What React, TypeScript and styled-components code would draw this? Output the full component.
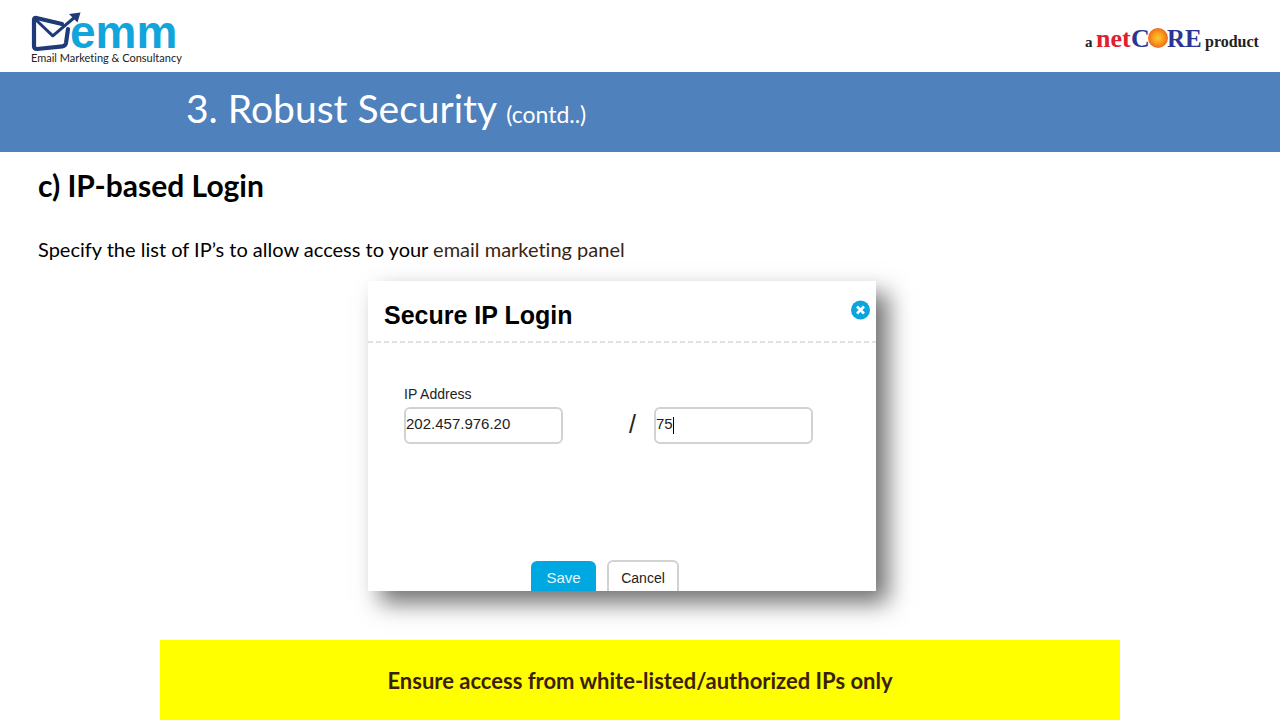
import React, { useState } from "react";
import styled, { createGlobalStyle } from "styled-components";

const GlobalStyle = createGlobalStyle`
  *, *::before, *::after { box-sizing: border-box; }
  body {
    margin: 0;
    background: #fff;
    color: #000;
    font-family: Lato, "Open Sans", sans-serif;
    font-variant-ligatures: none;
  }
  h1, h2, h3, p { margin: 0; }
`;

const Slide = styled.div`
  display: flex;
  flex-direction: column;
  min-height: 100vh;
`;

const Header = styled.header`
  display: flex;
  justify-content: space-between;
  align-items: flex-start;
  height: 72px;
  padding: 0 16px 0 28px;
`;

const Logo = styled.svg`
  display: block;
  flex: none;
`;

const TitleBand = styled.div`
  display: flex;
  align-items: center;
  height: 80px;
  padding: 0 24px 2px 186px;
  background: #4f81bd;
  color: #fff;
`;

const Title = styled.h1`
  font-size: 39px;
  font-weight: 400;
  line-height: 48px;
`;

const TitleNote = styled.small`
  font-size: 23px;
`;

const Main = styled.main`
  flex: 1;
  display: flex;
  flex-direction: column;
  padding: 15px 74px 48px 38px;
`;

const Heading = styled.h2`
  font-size: 30px;
  font-weight: 700;
  line-height: 36px;
`;

const Lead = styled.p`
  margin-top: 32px;
  font-size: 20px;
  line-height: 28px;
`;

const Accent = styled.span`
  color: #3b2314;
`;

const Dialog = styled.form`
  align-self: center;
  display: flex;
  flex-direction: column;
  width: 508px;
  max-width: 100%;
  height: 310px;
  margin-top: 18px;
  background: #fff;
  box-shadow: 12px 12px 22px rgba(0, 0, 0, 0.56);
  font-family: "Liberation Sans", Arial, sans-serif;
`;

const DialogHeader = styled.div`
  display: flex;
  justify-content: space-between;
  align-items: flex-start;
  height: 62px;
  padding: 18px 5px 0 16px;
`;

const DialogTitle = styled.h3`
  font-size: 25px;
  font-weight: 700;
  line-height: 32px;
`;

const CloseButton = styled.button`
  display: block;
  padding: 0;
  border: 0;
  background: none;
  line-height: 0;
  cursor: pointer;
`;

const Divider = styled.div`
  height: 2px;
  margin-top: -2px;
  background: repeating-linear-gradient(90deg, #e2e2e2 0 5px, transparent 5px 8px);
`;

const Fields = styled.div`
  display: flex;
  align-items: flex-end;
  padding: 42px 63px 0 36px;
`;

const Field = styled.div`
  position: relative;
  display: flex;
  flex-direction: column;
  width: 159px;
`;

const FieldLabel = styled.label`
  font-size: 14px;
  line-height: 18px;
  margin-bottom: 4px;
  color: #222;
`;

const TextInput = styled.input`
  width: 100%;
  height: 37px;
  padding: 0 0 4px;
  border: 2px solid #d2d2d2;
  border-radius: 6px;
  outline: 0;
  background: #fff;
  color: #222;
  font: 15px "Liberation Sans", Arial, sans-serif;
`;

const Caret = styled.span`
  position: absolute;
  left: 19px;
  bottom: 10px;
  width: 1px;
  height: 17px;
  background: #000;
`;

const Slash = styled.span`
  flex: 1;
  padding-left: 48px;
  text-align: center;
  font-size: 25px;
  line-height: 40px;
  color: #222;
`;

const Actions = styled.div`
  display: flex;
  gap: 11px;
  height: 31px;
  margin-top: auto;
  padding-left: 163px;
  overflow: hidden;
`;

const Button = styled.button<{ $primary?: boolean }>`
  width: ${(p) => (p.$primary ? 65 : 72)}px;
  height: 36px;
  margin-top: ${(p) => (p.$primary ? 1 : 0)}px;
  padding: 0 0 ${(p) => (p.$primary ? 4 : 1)}px;
  border: ${(p) => (p.$primary ? "0" : "2px solid #d2d2d2")};
  border-radius: 6px;
  background: ${(p) => (p.$primary ? "#00a8e1" : "#fff")};
  color: ${(p) => (p.$primary ? "#e4f7ff" : "#222")};
  font: ${(p) => (p.$primary ? 15 : 14)}px "Liberation Sans", Arial, sans-serif;
  cursor: pointer;
`;

const Banner = styled.footer`
  display: flex;
  align-items: center;
  justify-content: center;
  height: 80px;
  margin: 0 12.5%;
  padding-top: 2px;
  background: #ff0;
  color: #3b1f0b;
  font-size: 22px;
  font-weight: 700;
  line-height: 28px;
`;

function EmmLogo() {
  return (
    <Logo width="160" height="72" viewBox="28 0 160 72" role="img" aria-label="emm Email Marketing & Consultancy">
      <g fill="none" stroke="#1f3a7a" strokeLinejoin="round" strokeLinecap="round">
        <path d="M68 29 L66 43 Q65.5 46 62.5 46.3 L37 49 Q34 49 34 46 V20 Q34 17.5 36.5 18 L62 24" strokeWidth="4.2" />
        <path d="M35 19 L52.8 35.8 L75 17" strokeWidth="3" />
      </g>
      <path d="M69 14 L80.5 12.5 L77.5 22.5 Z" fill="#1f3a7a" />
      <text x="70" y="48" fontFamily="Liberation Sans, Arial, sans-serif" fontWeight="700" fontSize="46" fill="#12a5dc">
        emm
      </text>
      <text x="31" y="62" fontFamily="Lato, sans-serif" fontSize="11" fill="#222">
        Email Marketing &amp; Consultancy
      </text>
    </Logo>
  );
}

function NetcoreLogo() {
  return (
    <Logo width="184" height="72" viewBox="1080 0 184 72" role="img" aria-label="a netCORE product">
      <defs>
        <radialGradient id="sun">
          <stop offset="0" stopColor="#ffc832" />
          <stop offset="0.5" stopColor="#fba01e" />
          <stop offset="1" stopColor="#ee6a1e" />
        </radialGradient>
      </defs>
      <g fontFamily="Liberation Serif, Times New Roman, serif" fontWeight="700">
        <text x="1085" y="47" fontSize="15" fill="#222">a</text>
        <text x="1096" y="47" fontSize="26" fill="#e0202c">net</text>
        <text x="1131" y="47" fontSize="26" fill="#2a3594">C</text>
        <text x="1167" y="47" fontSize="25" fill="#2a3594">RE</text>
        <text x="1205" y="47" fontSize="16" fill="#222">product</text>
      </g>
      <circle cx="1158" cy="38" r="10" fill="url(#sun)" />
    </Logo>
  );
}

export default function App() {
  const [address, setAddress] = useState("202.457.976.20");
  const [range, setRange] = useState("75");

  return (
    <Slide>
      <GlobalStyle />
      <Header>
        <EmmLogo />
        <NetcoreLogo />
      </Header>
      <TitleBand>
        <Title>
          3. Robust Security <TitleNote>(contd..)</TitleNote>
        </Title>
      </TitleBand>
      <Main>
        <Heading>c) IP-based Login</Heading>
        <Lead>
          Specify the list of IP’s to allow access to your <Accent>email marketing panel</Accent>
        </Lead>
        <Dialog onSubmit={(e) => e.preventDefault()}>
          <DialogHeader>
            <DialogTitle>Secure IP Login</DialogTitle>
            <CloseButton type="button" aria-label="Close">
              <svg width="21" height="22" viewBox="0 0 21 22">
                <circle cx="10.5" cy="11" r="9.5" fill="#0aa5de" />
                <path d="M7 7.5 L14 14.5 M14 7.5 L7 14.5" stroke="#fff" strokeWidth="2.6" />
              </svg>
            </CloseButton>
          </DialogHeader>
          <Divider />
          <Fields>
            <Field>
              <FieldLabel htmlFor="ip-address">IP Address</FieldLabel>
              <TextInput id="ip-address" value={address} onChange={(e) => setAddress(e.target.value)} />
            </Field>
            <Slash>/</Slash>
            <Field>
              <TextInput aria-label="IP range" value={range} onChange={(e) => setRange(e.target.value)} />
              <Caret />
            </Field>
          </Fields>
          <Actions>
            <Button type="submit" $primary>Save</Button>
            <Button type="button">Cancel</Button>
          </Actions>
        </Dialog>
      </Main>
      <Banner>Ensure access from white-listed/authorized IPs only</Banner>
    </Slide>
  );
}
